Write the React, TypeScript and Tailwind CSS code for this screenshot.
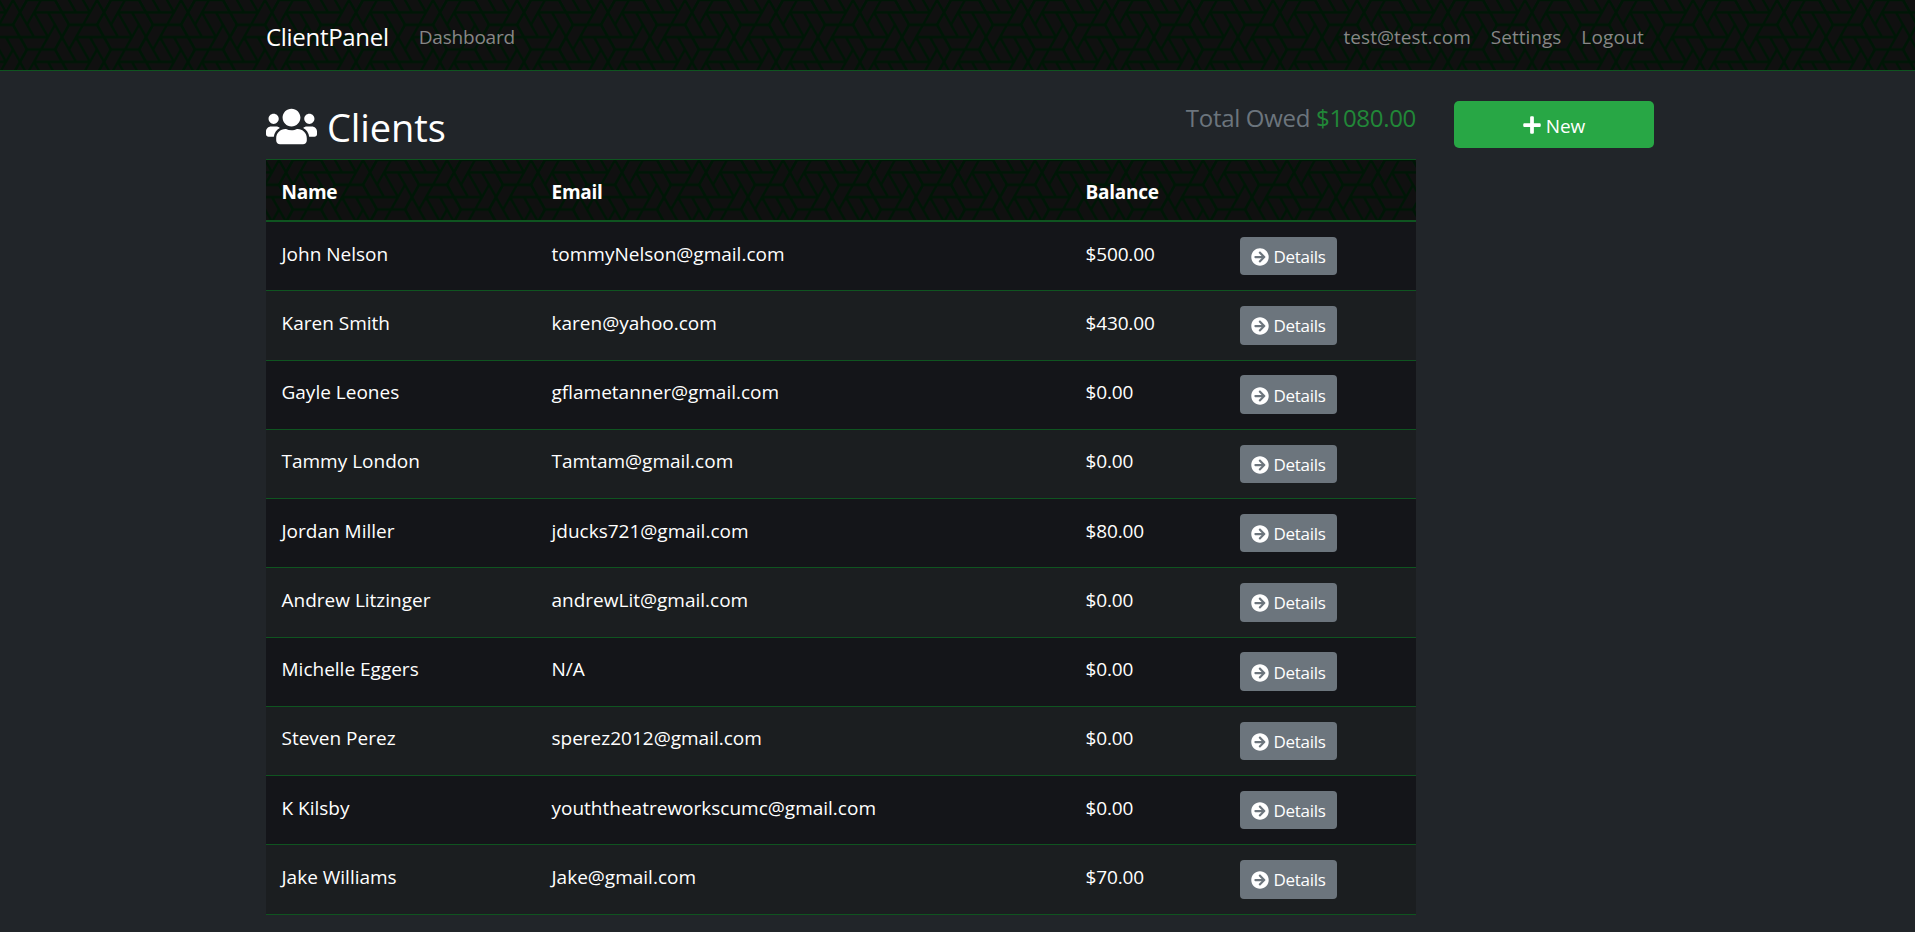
import React from 'react';
import { FaUsers, FaPlus, FaArrowCircleRight } from 'react-icons/fa';

type Client = { name: string; email: string; balance: string };

const clients: Client[] = [
  { name: 'John Nelson', email: 'tommyNelson@gmail.com', balance: '$500.00' },
  { name: 'Karen Smith', email: 'karen@yahoo.com', balance: '$430.00' },
  { name: 'Gayle Leones', email: 'gflametanner@gmail.com', balance: '$0.00' },
  { name: 'Tammy London', email: 'Tamtam@gmail.com', balance: '$0.00' },
  { name: 'Jordan Miller', email: 'jducks721@gmail.com', balance: '$80.00' },
  { name: 'Andrew Litzinger', email: 'andrewLit@gmail.com', balance: '$0.00' },
  { name: 'Michelle Eggers', email: 'N/A', balance: '$0.00' },
  { name: 'Steven Perez', email: 'sperez2012@gmail.com', balance: '$0.00' },
  { name: 'K Kilsby', email: 'youththeatreworkscumc@gmail.com', balance: '$0.00' },
  { name: 'Jake Williams', email: 'Jake@gmail.com', balance: '$70.00' },
];

const cellLines =
  'M27 0H55L69 24.75L55 49.5H27L13 24.75Z M34 12.4H62 M20 37.1H48 M41 0L27 24.75 M55 24.75L41 49.5 M20 12.4L34 37.1 M48 12.4L62 37.1 M34 12.4L48 37.1';

/* Woven hexagon texture used behind the navbar and the table head. */
function Weave({ id }: { id: string }) {
  return (
    <svg className="absolute inset-0 -z-10 h-full w-full" aria-hidden="true">
      <defs>
        <pattern id={id} width="84" height="49.5" patternUnits="userSpaceOnUse">
          <g fill="none" stroke="#001606" strokeWidth="2.5">
            <path d={cellLines} />
            <path d={cellLines} transform="translate(42 24.75)" />
            <path d={cellLines} transform="translate(42 -24.75)" />
            <path d={cellLines} transform="translate(-42 24.75)" />
            <path d={cellLines} transform="translate(-42 -24.75)" />
          </g>
        </pattern>
      </defs>
      <rect width="100%" height="100%" fill="#101010" />
      <rect width="100%" height="100%" fill={`url(#${id})`} />
    </svg>
  );
}

const columns = 'grid grid-cols-[270px_534px_154px_1fr] pl-[15.5px]';

export default function App() {
  return (
    <div className="h-[932px] overflow-hidden bg-[#212529] font-['Open_Sans','Noto_Sans',sans-serif] text-[19px] leading-[30px] text-white">
      <nav className="relative isolate h-[71px] border-b border-[#0f5420]">
        <Weave id="weave-nav" />
        <div className="flex h-full items-center pl-[266px] pr-[271px] pt-[3px] text-[#878787]">
          <a className="mr-[30px] text-[24px] tracking-[-0.3px] text-white">ClientPanel</a>
          <a className="tracking-[-0.2px]">Dashboard</a>
          <div className="ml-auto flex gap-[20px]">
            <a className="tracking-[0.05px]">test@test.com</a>
            <a>Settings</a>
            <a className="tracking-[0.2px]">Logout</a>
          </div>
        </div>
      </nav>

      <main className="flex items-start pl-[266px]">
        <section className="w-[1150px]">
          <header className="flex h-[88px] justify-between">
            <h2 className="flex h-[50px] items-center gap-[10px] pt-[61px] text-[38px]">
              <FaUsers className="-mt-[11px] h-[41px] w-[51px]" />
              <span className="-mt-[11px] tracking-[-0.1px]">Clients</span>
            </h2>
            <h5 className="pt-[32px] text-[24px] tracking-[-0.3px] text-[#6c757d]">
              Total Owed <span className="text-[#218838]">$1080.00</span>
            </h5>
          </header>

          <div className={`relative isolate h-[63.1px] items-center border-b-2 border-t border-[#0f5420] pt-[4px] font-bold tracking-[-0.25px] ${columns}`}>
            <Weave id="weave-head" />
            <span>Name</span>
            <span>Email</span>
            <span>Balance</span>
          </div>

          <div>
            {clients.map((c) => (
              <div
                key={c.name}
                className={`h-[69.25px] items-start border-b border-[#0f5420] odd:bg-[#141519] even:bg-[#1b1e20] ${columns}`}
              >
                <span className="pt-[16.5px]">{c.name}</span>
                <span className="pt-[16.5px]">{c.email}</span>
                <span className="pt-[16.5px] tracking-[-0.15px]">{c.balance}</span>
                <button className="mt-[14.9px] flex h-[38.3px] w-[97px] items-center gap-[5px] rounded-[4px] bg-[#6c757d] pl-[11px] text-[17px] tracking-[-0.3px]">
                  <FaArrowCircleRight className="mt-[2px] size-[18px]" />
                  <span className="pt-[2px]">Details</span>
                </button>
              </div>
            ))}
          </div>
        </section>

        <button className="ml-[38px] mt-[30px] flex h-[47px] w-[200px] items-center justify-center gap-[5px] rounded-[5px] bg-[#28a745]">
          <FaPlus className="h-[20px] w-[18px]" />
          <span className="pt-[2px]">New</span>
        </button>
      </main>
    </div>
  );
}
